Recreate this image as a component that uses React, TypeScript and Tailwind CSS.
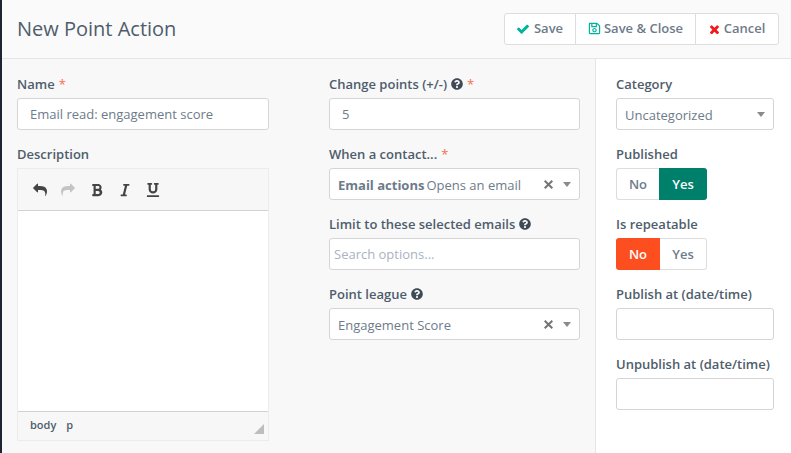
import React from "react";
import {
  FaBold,
  FaItalic,
  FaQuestionCircle,
  FaRegSave,
  FaUnderline,
} from "react-icons/fa";

const REPLY_PATH =
  "M1792 1120q0 166-127 451-3 7-10.5 24t-13.5 30-13 22q-12 17-28 17-15 0-23.5-10t-8.5-25q0-9 2.5-26.5t2.5-23.5q5-68 5-123 0-101-17.5-181t-48.5-138.5-80-101-105.5-69.5-133-42.5-154-21.5-175.5-6h-224v256q0 26-19 45t-45 19-45-19l-512-512q-19-19-19-45t19-45l512-512q19-19 45-19t45 19 19 45v256h224q713 0 875 403 53 134 53 333z";
const TIMES_PATH =
  "M1490 1322q0 40-28 68l-136 136q-28 28-68 28t-68-28l-294-294-294 294q-28 28-68 28t-68-28l-136-136q-28-28-28-68t28-68l294-294-294-294q-28-28-28-68t28-68l136-136q28-28 68-28t68 28l294 294 294-294q28-28 68-28t68 28l136 136q28 28 28 68t-28 68l-294 294 294 294q28 28 28 68z";
const CHECK_PATH =
  "M1671 566q0 40-28 68l-724 724-136 136q-28 28-68 28t-68-28l-136-136-362-362q-28-28-28-68t28-68l136-136q28-28 68-28t68 28l294 295 656-657q28-28 68-28t68 28l136 136q28 28 28 68z";

function Glyph({
  d,
  viewBox,
  className,
  flip,
}: {
  d: string;
  viewBox: string;
  className: string;
  flip?: boolean;
}) {
  return (
    <svg className={className} viewBox={viewBox} fill="currentColor">
      <path d={d} transform={flip ? "matrix(-1 0 0 1 1792 0)" : undefined} />
    </svg>
  );
}

function Label({
  text,
  help,
  required,
}: {
  text: string;
  help?: boolean;
  required?: boolean;
}) {
  return (
    <div className="flex h-[23px] items-start text-[13px] font-semibold leading-[18px] text-[#4e5d6c]">
      <span>{text}</span>
      {help && <FaQuestionCircle className="ml-1 mt-[3px] text-[12px] text-[#3f4a56]" />}
      {required && <span className="ml-1 font-normal text-[#f86b4f]">*</span>}
    </div>
  );
}

function Field({ children }: { children?: React.ReactNode }) {
  return (
    <div className="flex h-8 items-center rounded-[3px] border border-[#d5d5d5] bg-white text-[13px] leading-[20px] text-[#6d7b8a]">
      {children}
    </div>
  );
}

function SelectField({
  children,
  clear,
}: {
  children: React.ReactNode;
  clear?: boolean;
}) {
  return (
    <Field>
      <span className="flex-1 pl-2 pt-[1px] whitespace-nowrap">{children}</span>
      {clear && (
        <svg className="mr-[10px] h-[9px] w-[9px] text-[#757575]" viewBox="0 0 9 9">
          <path d="M0.7 0.7L8.3 8.3M8.3 0.7L0.7 8.3" stroke="currentColor" strokeWidth="2" />
        </svg>
      )}
      <span className="mr-[8px] h-0 w-0 border-x-[4px] border-t-[5px] border-x-transparent border-t-[#8a8a8a]" />
    </Field>
  );
}

function Toggle({ active }: { active: "no" | "yes" }) {
  return (
    <div className="flex h-8 w-[91px] text-[13px] font-semibold">
      <div
        className={
          active === "no"
            ? "flex w-[44px] items-center justify-center rounded-l-[3px] bg-[#fc4e1f] pt-[1px] text-white"
            : "flex w-[43px] items-center justify-center rounded-l-[3px] border border-r-0 border-[#dddddd] bg-white pt-[1px] text-[#6d7b8a]"
        }
      >
        No
      </div>
      <div
        className={
          active === "yes"
            ? "flex flex-1 items-center justify-center rounded-r-[3px] bg-[#00806b] pt-[1px] text-white"
            : "flex flex-1 items-center justify-center rounded-r-[3px] border border-l-0 border-[#dddddd] bg-white pt-[1px] text-[#6d7b8a]"
        }
      >
        Yes
      </div>
    </div>
  );
}

function Group({ children }: { children: React.ReactNode }) {
  return <div className="mb-[15px]">{children}</div>;
}

export default function App() {
  return (
    <div className="flex h-[453px] w-[791px] overflow-hidden bg-white font-['Open_Sans',sans-serif]">
      <div className="w-[2px] shrink-0 bg-[#1d2532]" />
      <div className="flex min-w-0 flex-1 flex-col">
        <header className="flex h-[59px] shrink-0 items-center justify-between border-b border-[#e6e6e6] bg-[#fafafa] pl-[15px] pr-[12px]">
          <h1 className="text-[20px] font-normal text-[#4e5d6c]">New Point Action</h1>
          <div className="mb-[1px] flex h-8 rounded-[3px] border border-[#dddddd] bg-white text-[13px] font-semibold text-[#6d7b8a]">
            <button className="flex w-[71px] items-center justify-center gap-[5px] border-r border-[#dddddd]">
              <Glyph
                d={CHECK_PATH}
                viewBox="121 121 1550 1550"
                className="h-[12px] w-[12px] text-[#00b49c]"
              />
              Save
            </button>
            <button className="flex w-[120px] items-center justify-center gap-[3px] border-r border-[#dddddd]">
              <FaRegSave className="text-[13px] text-[#00b49c]" />
              Save &amp; Close
            </button>
            <button className="flex w-[82px] items-center justify-center gap-[5px]">
              <Glyph
                d={TIMES_PATH}
                viewBox="174 208 1316 1316"
                className="h-[10px] w-[10px] text-[#f01c1c]"
              />
              Cancel
            </button>
          </div>
        </header>
        <div className="flex min-h-0 flex-1">
          <main className="flex w-[593px] shrink-0 gap-[60px] bg-[#f8f8f8] pl-[15px] pt-4">
            <div className="w-[252px]">
              <Group>
                <Label text="Name" required />
                <Field>
                  <span className="pl-3">Email read: engagement score</span>
                </Field>
              </Group>
              <Label text="Description" />
              <div className="flex h-[273px] flex-col border border-[#ececec]">
                <div className="flex h-[42px] shrink-0 items-center border-b border-[#d2d2d2] bg-[#f7f7f7] pl-[15px] text-[#444444]">
                  <Glyph d={REPLY_PATH} viewBox="0 0 1792 1792" className="h-[14px] w-[14px]" />
                  <Glyph
                    d={REPLY_PATH}
                    viewBox="0 0 1792 1792"
                    className="ml-[14px] h-[14px] w-[14px] text-[#c4c4c4]"
                    flip
                  />
                  <FaBold className="ml-[15px] text-[14px]" />
                  <FaItalic className="ml-[14px] text-[14px]" />
                  <FaUnderline className="ml-[14px] text-[14px]" />
                </div>
                <div className="flex-1 bg-white" />
                <div className="relative flex h-[29px] shrink-0 items-center gap-[10px] border-t border-[#d2d2d2] bg-[#f7f7f7] pb-[2px] pl-3 text-[11px] font-semibold text-[#4e5d6c]">
                  <span>body</span>
                  <span>p</span>
                  <svg className="absolute bottom-[6px] right-[4px]" width="10" height="10" viewBox="0 0 10 10">
                    <path d="M10 0V10H0Z" fill="#bdbdbd" />
                  </svg>
                </div>
              </div>
            </div>
            <div className="w-[251px]">
              <Group>
                <Label text="Change points (+/-)" help required />
                <Field>
                  <span className="pl-3">5</span>
                </Field>
              </Group>
              <Group>
                <Label text="When a contact..." required />
                <SelectField clear>
                  <span className="font-bold">Email actions</span>
                  <span className="ml-[2px]">Opens an email</span>
                </SelectField>
              </Group>
              <Group>
                <Label text="Limit to these selected emails" help />
                <Field>
                  <span className="pl-1 text-[#a9b3bf]">Search options...</span>
                </Field>
              </Group>
              <Group>
                <Label text="Point league" help />
                <SelectField clear>Engagement Score</SelectField>
              </Group>
            </div>
          </main>
          <aside className="flex-1 border-l border-[#e6e6e6] bg-white pl-5 pr-[17px] pt-4">
            <Group>
              <Label text="Category" />
              <SelectField>Uncategorized</SelectField>
            </Group>
            <Group>
              <Label text="Published" />
              <Toggle active="yes" />
            </Group>
            <Group>
              <Label text="Is repeatable" />
              <Toggle active="no" />
            </Group>
            <Group>
              <Label text="Publish at (date/time)" />
              <Field />
            </Group>
            <Group>
              <Label text="Unpublish at (date/time)" />
              <Field />
            </Group>
          </aside>
        </div>
      </div>
    </div>
  );
}
